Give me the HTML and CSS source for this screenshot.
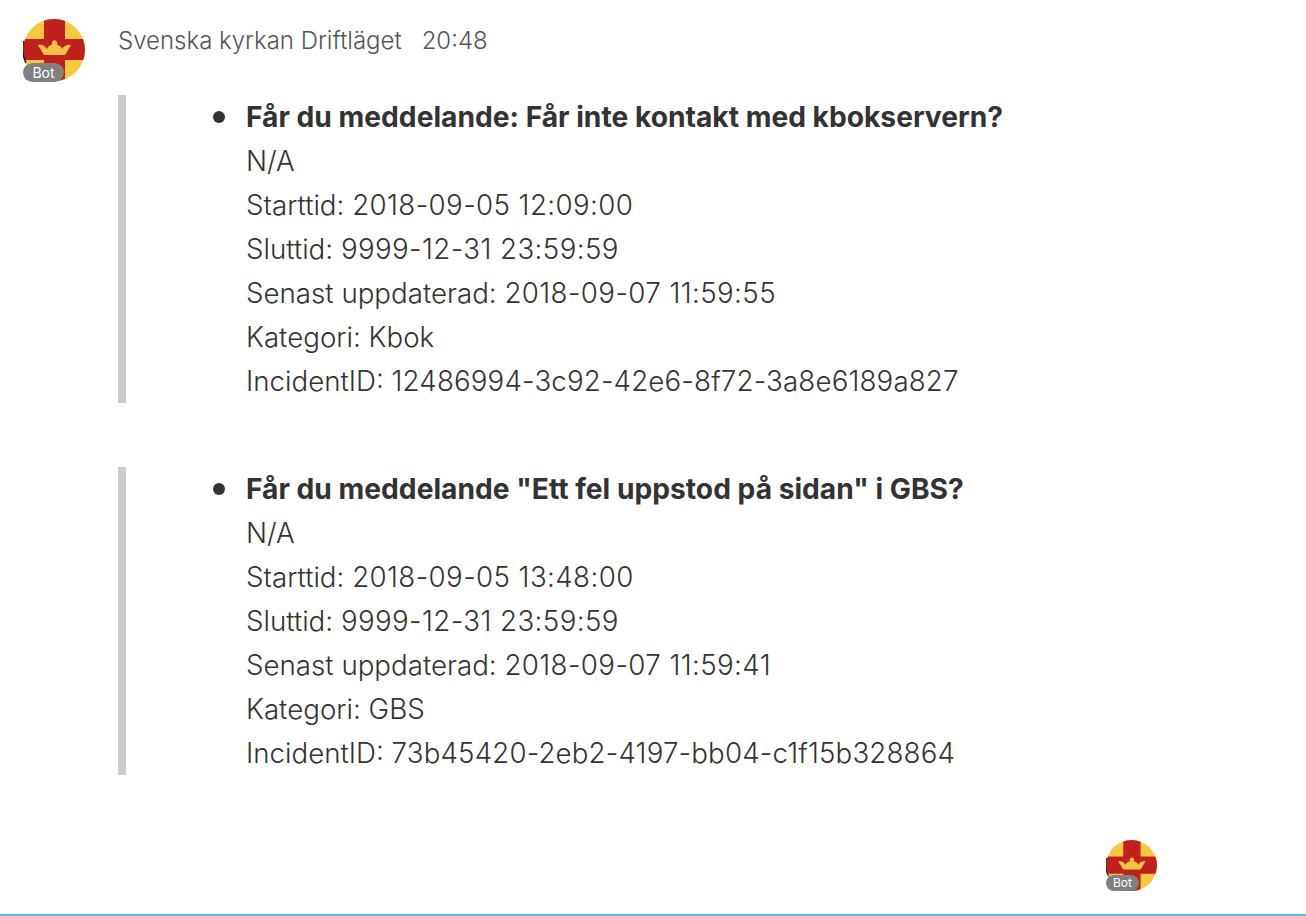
FILE: index.html
```html
<!DOCTYPE html>
<html lang="en">
<head>
<meta charset="UTF-8" />
<meta name="viewport" content="width=device-width, initial-scale=1" />
<title>Svenska kyrkan Driftläget</title>
<link rel="stylesheet" href="styles.css">
</head>
<body>

<div class="post">
  <div class="avatar">
    <svg class="logo" viewBox="0 0 62 62" aria-hidden="true">
      <clipPath id="disc"><circle cx="31" cy="31" r="31"/></clipPath>
      <circle cx="31" cy="31" r="31" fill="#f6c93f"/>
      <path d="M21 0H42V20H62V41H42V62H21V41H0V20H21Z" fill="#c0201f" clip-path="url(#disc)"/>
      <path d="M15 26C19 25 22 27 24 30C25 27 27 26 29 26C28 24 29 22 31.500 21C34 22 35 24 34 26C36 26 38 27 39 30C41 27 44 25 48 26L42 36H21Z" fill="#f3c544"/>
      <path d="M0.800 22A31 31 0 0 0 3 44" fill="none" stroke="#222" stroke-width="1.500"/>
    </svg>
    <span class="bot-tag">Bot</span>
  </div>
  <div class="post-body">
    <div class="post-head">
      <span class="author">Svenska kyrkan Driftläget</span>
      <span class="time">20:48</span>
    </div>

    <blockquote class="note">
      <ul>
        <li>
          <strong>Får du meddelande: Får inte kontakt med kbokservern?</strong><br>
          N/A<br>
          Starttid: <span class="val">2018-09-05 12:09:00</span><br>
          Sluttid: <span class="val">9999-12-31 23:59:59</span><br>
          Senast uppdaterad: <span class="val">2018-09-07 11:59:55</span><br>
          Kategori: Kbok<br>
          IncidentID: <span class="incident">12486994-3c92-42e6-8f72-3a8e6189a827</span>
        </li>
      </ul>
    </blockquote>

    <blockquote class="note">
      <ul>
        <li>
          <strong>Får du meddelande "Ett fel uppstod på sidan" i GBS?</strong><br>
          N/A<br>
          Starttid: <span class="val">2018-09-05 13:48:00</span><br>
          Sluttid: <span class="val">9999-12-31 23:59:59</span><br>
          Senast uppdaterad: <span class="val">2018-09-07 11:59:41</span><br>
          Kategori: GBS<br>
          IncidentID: <span class="incident">73b45420-2eb2-4197-bb04-c1f15b328864</span>
        </li>
      </ul>
    </blockquote>
  </div>
</div>

<div class="seen">
  <div class="avatar small">
    <svg class="logo" viewBox="0 0 62 62" aria-hidden="true">
      <circle cx="31" cy="31" r="31" fill="#f6c93f"/>
      <path d="M21 0H42V20H62V41H42V62H21V41H0V20H21Z" fill="#c0201f" clip-path="url(#disc)"/>
      <path d="M15 26C19 25 22 27 24 30C25 27 27 26 29 26C28 24 29 22 31.500 21C34 22 35 24 34 26C36 26 38 27 39 30C41 27 44 25 48 26L42 36H21Z" fill="#f3c544"/>
      <path d="M0.800 22A31 31 0 0 0 3 44" fill="none" stroke="#222" stroke-width="1.500"/>
    </svg>
    <span class="bot-tag">Bot</span>
  </div>
</div>

</body>
</html>
```

FILE: styles.css
```css
html, body { height: 100%; }
body { margin: 0; height: 916px; overflow: hidden; box-sizing: border-box; border-bottom: 2px solid #4fb8e3; background: #fff; font-family: Inter, sans-serif; color: #333; position: relative; }

.post { display: flex; padding: 19px 0 0 23px; gap: 33px; }
.avatar { position: relative; width: 62px; height: 62px; flex: none; }
.logo { display: block; width: 100%; height: 100%; }
.bot-tag { position: absolute; left: 0; top: 44px; width: 41px; height: 19px; border-radius: 10px; background: #808080; color: #fff; font-size: 14px; line-height: 19px; text-align: center; }

.post-body { flex: 1; }
.post-head { height: 44px; margin-top: -1px; display: flex; align-items: center; gap: 20px; font-size: 24px; font-weight: 300; color: #555; }

.note { margin: 33px 0 64px; border-left: 8px solid #ccc; padding: 0; height: 308px; }
.note ul { margin: 0; padding: 0 0 0 120px; list-style: none; }
.note li { position: relative; font-size: 27.7px; line-height: 44px; font-weight: 300; }
.note li::before { content: ""; position: absolute; left: -33px; top: 16px; width: 12px; height: 12px; border-radius: 50%; background: #333; }
.note strong { font-size: 28.2px; font-weight: 700; }
.val { letter-spacing: .4px; }
.incident { letter-spacing: .16px; }

.seen { position: absolute; left: 1106px; top: 840px; }
.avatar.small { width: 51px; height: 51px; }
.small .bot-tag { top: 35px; width: 33px; height: 16px; line-height: 16px; font-size: 12px; border-radius: 8px; }
```
